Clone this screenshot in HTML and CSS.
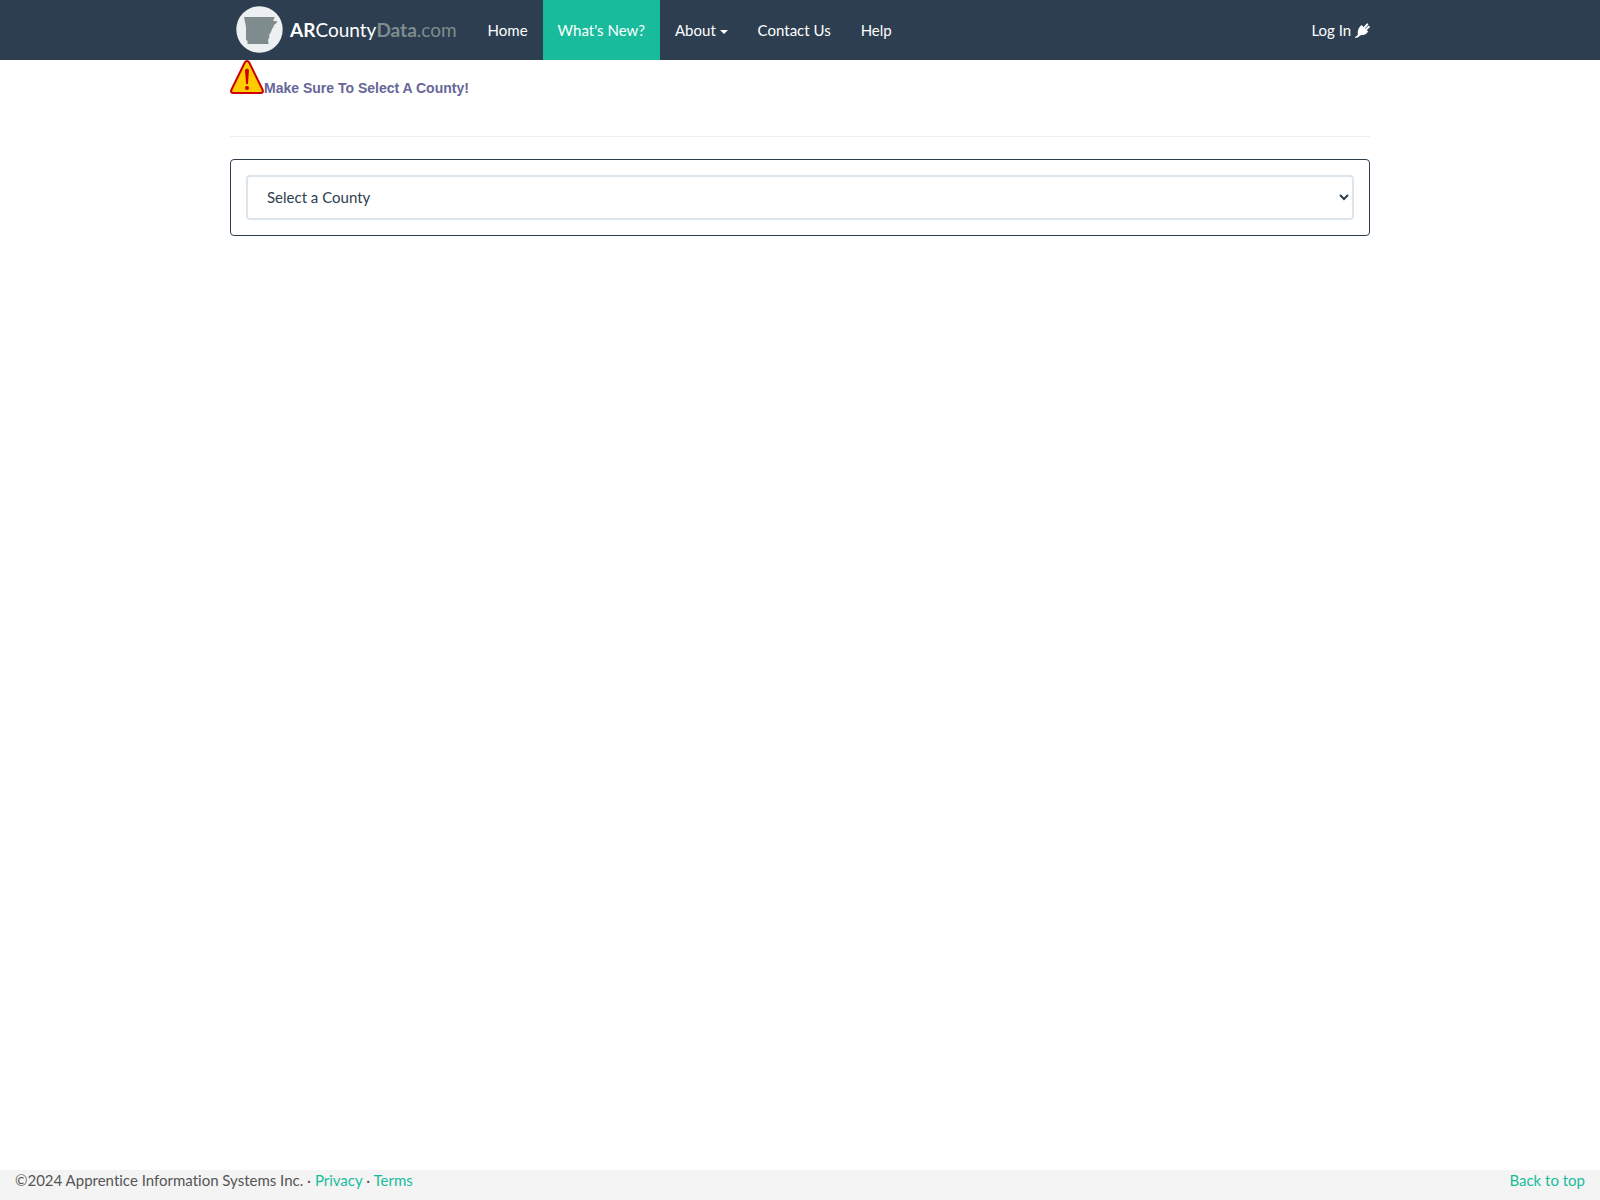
FILE: index.html
```html
<!DOCTYPE html>
<html lang="en">
<head>
<meta charset="utf-8">
<meta name="viewport" content="width=device-width, initial-scale=1">
<title>ARCountyData.com</title>
<link rel="stylesheet" href="styles.css">
</head>
<body id="top">
<header class="navbar">
  <nav class="container nav-row">
    <a class="brand" href="#">
      <svg class="brand-logo" viewBox="0 0 47 47" aria-hidden="true">
        <circle cx="23.5" cy="23.5" r="23.2" fill="#ecf0f1"/>
        <path d="M8 11H38.500L38.500 12L37 15H41L40.500 17L38 19L37.500 21L36 23L35 26L33 29L33.500 31L32 34L32.500 37V38H11.500V35L10 34V21Z" fill="#7f8c8d"/>
      </svg>
      <span><b>AR</b>County<span class="muted"><b>Data</b>.com</span></span>
    </a>
    <ul class="menu">
      <li><a href="#">Home</a></li>
      <li><a class="active" href="#">What's New?</a></li>
      <li><a href="#">About <span class="caret"></span></a></li>
      <li><a href="#">Contact Us</a></li>
      <li><a href="#">Help</a></li>
    </ul>
    <a class="login" href="#">Log In
      <svg class="plug" viewBox="0 0 15 15" aria-hidden="true">
        <path d="M9.800 4.200L12.300 1.400M11.200 6.200L13.900 3.800" stroke="#fff" stroke-width="2" stroke-linecap="round" fill="none"/>
        <path d="M6.500 1.900L13.200 8.600C12 10.800 9.500 12.500 6.800 12C5.500 11.900 4.500 13.500 3 14.200C1.800 14.800.8 15 0 14.900L.6 13.400C1.700 13.300 2.400 12.600 2.900 11.200C2.200 8 3.200 4.600 6.500 1.900Z" fill="#fff"/>
      </svg>
    </a>
  </nav>
</header>
<main class="container">
  <p class="notice">
    <svg class="warning" viewBox="0 0 34 34" aria-hidden="true">
      <path d="M17 1C18 1 18.600 1.500 19.200 2.500L32.700 30C33.400 31.800 32.500 33 30.800 33H3.200C1.500 33 .6 31.800 1.300 30L14.800 2.500C15.400 1.500 16 1 17 1Z" fill="#fc0" stroke="#c00" stroke-width="2"/>
      <path d="M15 10.500C15 8.200 19 8.200 19 10.500L17.900 24H16.100Z" fill="#c00"/>
      <circle cx="17" cy="28" r="2" fill="#c00"/>
    </svg>
    <strong>Make Sure To Select A County!</strong>
  </p>
  <hr class="rule">
  <form class="panel">
    <select class="county" aria-label="County">
      <option>Select a County</option>
    </select>
  </form>
</main>
<footer class="footer">
  <span>©2024 Apprentice Information Systems Inc. · <a href="#">Privacy</a> · <a href="#">Terms</a></span>
  <a href="#top">Back to top</a>
</footer>
</body>
</html>
```

FILE: styles.css
```css
* { box-sizing: border-box; }
body {
  margin: 0;
  min-height: 100vh;
  display: flex;
  flex-direction: column;
  font: 15px/21px Lato, "Liberation Sans", sans-serif;
  font-variant-ligatures: none;
  color: #2c3e50;
  background: #fff;
}
a { color: #18bc9c; text-decoration: none; }
.container {
  width: 100%;
  max-width: 1170px;
  margin: 0 auto;
  padding: 0 15px;
}
.navbar { background: #2c3e50; }
.nav-row { display: flex; align-items: center; }
.navbar a { color: #fff; }
.brand {
  display: flex;
  align-items: center;
  gap: 7px;
  padding: 0 16px 2px 6px;
  font-size: 19px;
}
.brand-logo { width: 47px; height: 47px; }
.brand .muted { color: #7f8c8d; }
.menu { display: flex; list-style: none; margin: 0; padding: 0; }
.menu a { display: block; padding: 20px 15px 19px; }
.menu .active { background: #18bc9c; }
.caret {
  display: inline-block;
  vertical-align: middle;
  border-top: 4px solid;
  border-left: 4px solid transparent;
  border-right: 4px solid transparent;
}
.login { margin-left: auto; }
.plug { width: 15px; height: 15px; vertical-align: -2px; }
.notice {
  display: flex;
  align-items: flex-end;
  margin: 0;
  font: 14px/12px "Liberation Sans", Arial, sans-serif;
  color: #669;
}
.warning { width: 34px; height: 34px; }
.rule {
  height: 1px;
  margin: 42px 0 22px;
  border: 0;
  background: #ecf0f1;
}
.panel {
  padding: 15px;
  border: 1px solid #2c3e50;
  border-radius: 4px;
}
.county {
  display: block;
  width: 100%;
  height: 45px;
  padding: 9px 15px 11px;
  border: 2px solid #dce4ec;
  border-radius: 4px;
  background: #fff;
  color: #2c3e50;
  font: inherit;
}
.footer {
  display: flex;
  justify-content: space-between;
  min-height: 30px;
  margin-top: auto;
  padding: 0 15px;
  background: #f4f4f4;
  color: #555;
}
```
